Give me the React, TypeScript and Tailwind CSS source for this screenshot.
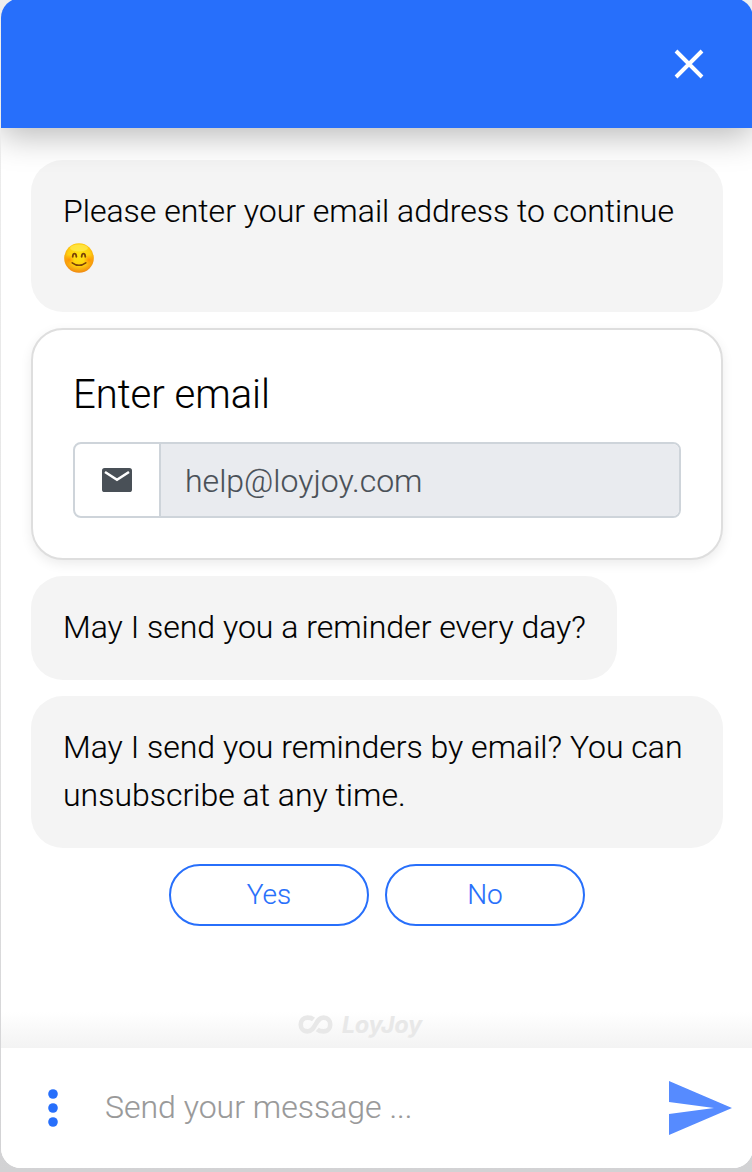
import React from "react";

function Bubble({ children, className = "" }: { children: React.ReactNode; className?: string }) {
  return (
    <div className={`rounded-[32px] bg-[#f4f4f4] px-8 pt-[27px] pb-[29px] text-[32px] leading-[48px] ${className}`}>
      {children}
    </div>
  );
}

function SmileEmoji() {
  return (
    <svg className="mt-2 ml-px block size-[30px]" viewBox="0 0 30 30" role="img" aria-label="Smiling face">
      <defs>
        <radialGradient id="face" cx="0.5" cy="0.4" r="0.62">
          <stop offset="0" stopColor="#ffe512" />
          <stop offset="0.6" stopColor="#ffd00f" />
          <stop offset="1" stopColor="#ef8010" />
        </radialGradient>
        <radialGradient id="cheek">
          <stop offset="0" stopColor="#ff7a00" stopOpacity="0.75" />
          <stop offset="1" stopColor="#ff8a00" stopOpacity="0" />
        </radialGradient>
      </defs>
      <circle cx="15" cy="15" r="14.8" fill="url(#face)" />
      <ellipse cx="15" cy="5" rx="9" ry="3.5" fill="#fff36b" opacity="0.5" />
      <circle cx="5" cy="17" r="5.5" fill="url(#cheek)" />
      <circle cx="25" cy="17" r="5.5" fill="url(#cheek)" />
      <path d="M8.7 13.8C9 9.6 12 9.6 12.4 13.8M17.6 13.8C18 9.6 21 9.6 21.3 13.8" fill="none" stroke="#7b4208" strokeWidth="1.8" strokeLinecap="round" />
      <path d="M8.2 19.8Q15 24.8 21.8 19.8" fill="none" stroke="#7b4208" strokeWidth="1.6" strokeLinecap="round" />
    </svg>
  );
}

function Choice({ children }: { children: React.ReactNode }) {
  return (
    <button className="flex h-[62px] w-[200px] items-center justify-center rounded-full border-2 border-[#276ffb] bg-white text-[28px] leading-[42px] text-[#276ffb]">
      {children}
    </button>
  );
}

export default function App() {
  return (
    <div className="h-[1172px] w-full overflow-hidden bg-linear-to-b from-[#eeeeee] via-[#e6e6e6] to-[#d2d2d4] pl-px font-['Roboto',sans-serif] font-light text-black [-webkit-text-stroke:0.12px]">
      <div className="-mt-0.5 flex h-[1170px] w-[752px] flex-col overflow-hidden rounded-[20px] bg-white">
        <header className="relative flex h-[130px] shrink-0 items-center justify-end bg-[#276ffb] pt-0.5 pr-[49px] shadow-[0_8px_32px_rgba(0,0,0,0.28)]">
          <button aria-label="Close">
            <svg className="block size-[30px]" viewBox="0 0 30 30" fill="none" stroke="white" strokeWidth="3.9">
              <path d="M2 2 28 28M28 2 2 28" />
            </svg>
          </button>
        </header>

        <main className="flex flex-1 flex-col items-start gap-4 pt-8 pl-[30px]">
          <Bubble className="h-[152px] w-[692px]">
            Please enter your email address to continue
            <SmileEmoji />
          </Bubble>

          <section className="h-[232px] w-[692px] rounded-[32px] border-2 border-[#dedede] bg-white px-10 pt-[35px] shadow-[0_4px_12px_rgba(0,0,0,0.08)]">
            <h2 className="text-[40px] leading-[60px]">Enter email</h2>
            <div className="mt-[17px] flex h-[76px] overflow-hidden rounded-lg border-2 border-[#ced4da]">
              <div className="flex w-[86px] shrink-0 items-center justify-center border-r-2 border-[#ced4da]">
                <svg className="block h-6 w-[30px]" viewBox="0 0 30 24">
                  <rect width="30" height="24" rx="2.6" fill="#495057" />
                  <path d="M3 4 15 11.8 27 4" fill="none" stroke="white" strokeWidth="2.6" />
                </svg>
              </div>
              <div className="flex-1 bg-[#e9ebef] pl-6 text-[32px] leading-[74px] text-[#495057]">help@loyjoy.com</div>
            </div>
          </section>

          <Bubble className="w-[586px] whitespace-nowrap">May I send you a reminder every day?</Bubble>
          <Bubble className="w-[692px]">
            <p className="whitespace-nowrap">May I send you reminders by email? You can</p>
            <p>unsubscribe at any time.</p>
          </Bubble>

          <div className="flex w-[692px] justify-center gap-4">
            <Choice>Yes</Choice>
            <Choice>No</Choice>
          </div>

          <div className="mt-auto -ml-[30px] flex h-12 shrink-0 self-stretch bg-linear-to-b from-white from-25% to-[#f3f3f3] pt-3 pl-[297px]">
            <svg className="mt-[3px] mr-[9px] block h-[19px] w-[35px]" viewBox="0 0 35 19" fill="none" stroke="#e8e8e8" strokeWidth="4.6">
              <path d="M15.5 4.4C14 3.1 12 2.6 9.5 2.6C.5 2.6 .5 16.4 9.5 16.4C18 16.4 17 2.6 25.5 2.6C34.5 2.6 34.5 16.4 25.5 16.4C22.5 16.4 20.8 15.8 19.2 14.4" />
            </svg>
            <span className="font-['Inter',sans-serif] text-[23px] leading-[26px] font-bold text-[#e8e8e8] italic">LoyJoy</span>
          </div>
        </main>

        <footer className="flex h-[120px] shrink-0 items-center bg-white pr-[21px] pl-[47px]">
          <button aria-label="More options">
            <svg className="block h-[38px] w-2.5" viewBox="0 0 10 38" fill="#276ffb">
              <circle cx="5" cy="5" r="4.8" />
              <circle cx="5" cy="19" r="4.8" />
              <circle cx="5" cy="33" r="4.8" />
            </svg>
          </button>
          <span className="mb-0.5 ml-[47px] text-[32px] leading-[48px] text-[#999999]">Send your message ...</span>
          <button className="ml-auto" aria-label="Send">
            <svg className="block h-[54px] w-[63px]" viewBox="0 0 63 54" fill="#568bff">
              <path d="M0 0 63 27 0 54V33L45 27 0 21Z" />
            </svg>
          </button>
        </footer>
      </div>
    </div>
  );
}
